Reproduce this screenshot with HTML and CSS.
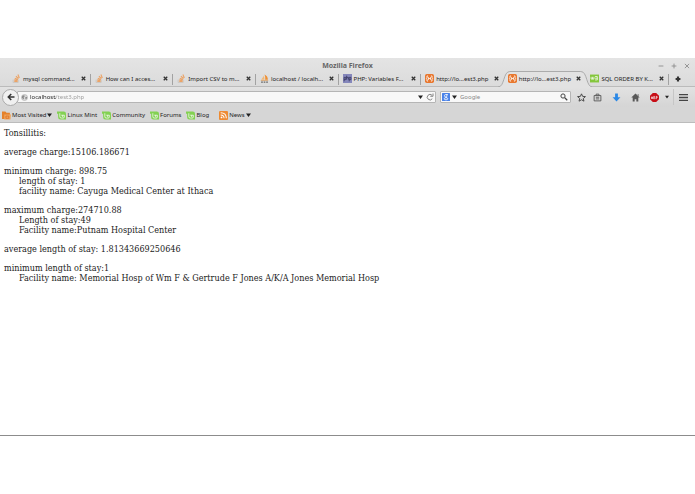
FILE: index.html
```html
<!DOCTYPE html>
<html lang="en">

<head>
  <meta charset="UTF-8">
  <meta name="viewport" content="width=device-width, initial-scale=1.0">
  <title>Mozilla Firefox</title>
  <link rel="stylesheet" href="styles.css">
</head>

<body>
  <!-- Shared icons -->
  <svg class="sprite" aria-hidden="true">
    <symbol id="stack" viewBox="0 0 16 16">
      <path d="M2 10v5h9v-5" fill="none" stroke="#c9c2bc" stroke-width="1.5" />
      <path d="M4 13h6M4 10.500l6 .8M5 7.500l5.500 2.300M7 4l4.500 4M10.500 1l2.500 6" fill="none" stroke="#eba468" stroke-width="2" />
    </symbol>
    <symbol id="pma" viewBox="0 0 16 16">
      <path d="M2 10L7 3l1 7z" fill="#f0b878" />
      <path d="M8 1c4 2 6 5 6 9H9c1-3 0-6-1-9z" fill="#ef8f32" />
      <path d="M1 11h14l-1 1.500H2z" fill="#d9a066" />
      <path d="M2 14.500h3M6.500 14.500h3M11 14.500h3" stroke="#666" stroke-width="2" />
    </symbol>
    <symbol id="phpnet" viewBox="0 0 16 16">
      <rect width="16" height="16" fill="#8587bb" />
      <path d="M2 13V6h3v4H2M6.500 3v7M6.500 6h3v4M11 13V6h3v4h-3" fill="none" stroke="#34345c" stroke-width="1.400" />
    </symbol>
    <symbol id="xampp" viewBox="0 0 16 16">
      <rect width="16" height="16" rx="3" fill="#e8772e" />
      <path d="M5.500 3.500H3.500v3.500l-1 1 1 1v3.500h2M10.500 3.500h2v3.500l1 1-1 1v3.500h-2M6 8h4M6 5.500v5M10 5.500v5" fill="none" stroke="#fff" stroke-width="1.400" />
    </symbol>
    <symbol id="w3" viewBox="0 0 16 16">
      <rect y="1" width="16" height="14" fill="#84c63c" />
      <path d="M2 5v4h5V5M4.500 5v4M9 4.500h4v6H9M9 7.500h4" fill="none" stroke="#fff" stroke-width="1.300" />
    </symbol>
    <symbol id="mint" viewBox="0 0 16 16">
      <path d="M0 1h12q4 0 4 4v10H6q-4 0-4-4V5H0z" fill="#83d152" />
      <path d="M5 4v6q0 2.500 2.500 2.500H11q2 0 2-2V7.500H7.500M10 7.500v3" fill="none" stroke="#fff" stroke-width="1.300" />
    </symbol>
    <symbol id="feed" viewBox="0 0 16 16">
      <rect width="16" height="16" rx="2" fill="#ee8a31" />
      <circle cx="4.500" cy="11.500" r="1.600" fill="#fff" />
      <path d="M3 7q6 0 6 6M3 3q10 0 10 10" fill="none" stroke="#fff" stroke-width="1.800" />
    </symbol>
    <symbol id="visited" viewBox="0 0 16 16">
      <path d="M0 1h6l2 2h6v11H0z" fill="#e5812b" />
      <path d="M4 6h12l-1 9H4z" fill="#f0a45c" />
      <path d="M7 13V9h5v4z" fill="none" stroke="#d9691a" stroke-width="1.200" />
    </symbol>
    <symbol id="close" viewBox="0 0 10 10">
      <path d="M1.500 1.500l7 7M8.500 1.500l-7 7" stroke="#333" stroke-width="2.600" />
    </symbol>
    <symbol id="down" viewBox="0 0 10 8">
      <path d="M0 1h10L5 8z" fill="#222" />
    </symbol>
  </svg>

  <div class="window">
    <header class="chrome">
      <div class="titlebar">
        <span class="title">Mozilla Firefox</span>
        <div class="window-buttons">
          <button aria-label="Minimize"><svg viewBox="0 0 10 10"><path d="M1 5h8" /></svg></button>
          <button aria-label="Maximize"><svg viewBox="0 0 10 10"><path d="M1 5h8M5 1v8" /></svg></button>
          <button aria-label="Close window"><svg viewBox="0 0 10 10"><path d="M1.500 1.500l7 7M8.500 1.500l-7 7" /></svg></button>
        </div>
      </div>

      <div class="tabs">
        <div class="tab">
          <svg class="icon"><use href="#stack" /></svg>
          <button class="tab-label">mysql command...</button>
          <button class="tab-close" aria-label="Close tab"><svg><use href="#close" /></svg></button>
        </div>
        <div class="tab">
          <svg class="icon"><use href="#stack" /></svg>
          <button class="tab-label">How can I acces...</button>
          <button class="tab-close" aria-label="Close tab"><svg><use href="#close" /></svg></button>
        </div>
        <div class="tab">
          <svg class="icon"><use href="#stack" /></svg>
          <button class="tab-label">Import CSV to m...</button>
          <button class="tab-close" aria-label="Close tab"><svg><use href="#close" /></svg></button>
        </div>
        <div class="tab">
          <svg class="icon"><use href="#pma" /></svg>
          <button class="tab-label">localhost / localh...</button>
          <button class="tab-close" aria-label="Close tab"><svg><use href="#close" /></svg></button>
        </div>
        <div class="tab">
          <svg class="icon"><use href="#phpnet" /></svg>
          <button class="tab-label">PHP: Variables F...</button>
          <button class="tab-close" aria-label="Close tab"><svg><use href="#close" /></svg></button>
        </div>
        <div class="tab before-active">
          <svg class="icon"><use href="#xampp" /></svg>
          <button class="tab-label">http://lo...est3.php</button>
          <button class="tab-close" aria-label="Close tab"><svg><use href="#close" /></svg></button>
        </div>
        <div class="tab active">
          <svg class="tab-shape" viewBox="0 0 96 16" preserveAspectRatio="none" aria-hidden="true">
            <path d="M0 16C7 16 5 .5 12 .5H84C91 .5 89 16 96 16" />
          </svg>
          <svg class="icon"><use href="#xampp" /></svg>
          <button class="tab-label">http://lo...est3.php</button>
          <button class="tab-close" aria-label="Close tab"><svg><use href="#close" /></svg></button>
        </div>
        <div class="tab">
          <svg class="icon"><use href="#w3" /></svg>
          <button class="tab-label">SQL ORDER BY K...</button>
          <button class="tab-close" aria-label="Close tab"><svg><use href="#close" /></svg></button>
        </div>
        <button class="new-tab" aria-label="New tab"><svg viewBox="0 0 10 10"><path d="M5 1v8M1 5h8" stroke="#333" stroke-width="3.600" /></svg></button>
      </div>

      <div class="toolbar">
        <button class="back" aria-label="Back"><svg viewBox="0 0 16 16"><path d="M15 8H3M8.500 2L2.500 8l6 6" fill="none" stroke="#333" stroke-width="3" /></svg></button>
        <div class="field address">
          <svg class="globe" viewBox="0 0 16 16"><circle cx="8" cy="8" r="7" fill="#d8d8d8" stroke="#999" /><path d="M3 4l4-1 2 2-3 2 1 3-2 2-3-4zM10 7l4 0-1 4-3 1z" fill="#888" /></svg>
          <input class="url" type="text" aria-label="Address" value="localhost/test3.php">
          <button aria-label="History"><svg class="arrow"><use href="#down" /></svg></button>
          <button aria-label="Reload"><svg class="reload" viewBox="0 0 16 16"><path d="M12.500 11.500A5.500 5.500 0 1 1 12 4.500M14 1v5.500H8.500" fill="none" stroke="#777" stroke-width="1.800" /></svg></button>
        </div>
        <div class="field search">
          <button class="engine" aria-label="Search engine">
            <svg class="google" viewBox="0 0 16 16"><rect width="16" height="16" rx="1" fill="#4a82e8" /><circle cx="7.500" cy="5.500" r="2.500" fill="none" stroke="#fff" stroke-width="1.600" /><ellipse cx="8" cy="11.500" rx="3.500" ry="2.200" fill="none" stroke="#fff" stroke-width="1.600" /><path d="M8 3h4M8 8l1.500 1.500" stroke="#fff" stroke-width="1.400" /></svg>
            <svg class="arrow"><use href="#down" /></svg>
          </button>
          <input type="text" aria-label="Search" placeholder="Google">
          <button aria-label="Go"><svg class="lens" viewBox="0 0 16 16"><circle cx="6" cy="6" r="4.200" fill="none" stroke="#444" stroke-width="2" /><path d="M9.500 9.500l5 5" stroke="#444" stroke-width="2.600" /></svg></button>
        </div>
        <div class="actions">
          <div class="bookmark-buttons">
            <button aria-label="Bookmark this page"><svg viewBox="0 0 16 16"><path d="M8 1.500l2 4.500 5 .4-3.800 3.300 1.200 4.800L8 12l-4.400 2.500 1.200-4.800L1 6.400 6 6z" fill="none" stroke="#444" stroke-width="1.700" /></svg></button>
            <button aria-label="Bookmarks"><svg viewBox="0 0 16 16"><path d="M2 4.500h12v9.500H2zM5.500 4V2h5v2M5 7.500h6M5 10.500h6" fill="none" stroke="#555" stroke-width="1.600" /></svg></button>
          </div>
          <button aria-label="Downloads"><svg viewBox="0 0 16 16"><path d="M5.500 1h5v6.500H15L8 15 1 7.500h4.500z" fill="#2a88e6" /></svg></button>
          <button aria-label="Home"><svg viewBox="0 0 16 16"><path d="M8 1l7.500 7H13v7H9.500v-4h-3v4H3V8H.5zM11.500 2h2v4z" fill="#595959" /></svg></button>
          <button class="adblock" aria-label="Adblock Plus">
            <svg viewBox="0 0 16 16"><path d="M5 0h6l5 5v6l-5 5H5l-5-5V5z" fill="#c70d16" /><path d="M2.500 10.500V7q1-1.500 2 0v3.500M2.500 9h2M6.500 6v4.500h1.500q1.500-1.200 0-2.300 1.200-1.100 0-2.200zM11 11V6h1.500q1.500 1.300 0 2.600H11" fill="none" stroke="#fff" stroke-width="1.100" /></svg>
            <svg class="arrow"><use href="#down" /></svg>
          </button>
          <button class="menu" aria-label="Open menu"><svg viewBox="0 0 16 16"><path d="M0 3h16M0 8h16M0 13h16" stroke="#444" stroke-width="2.400" /></svg></button>
        </div>
      </div>

      <nav class="bookmarks">
        <button><svg class="icon"><use href="#visited" /></svg>Most Visited<svg class="arrow"><use href="#down" /></svg></button>
        <a href="#"><svg class="icon"><use href="#mint" /></svg>Linux Mint</a>
        <a href="#"><svg class="icon"><use href="#mint" /></svg>Community</a>
        <a href="#"><svg class="icon"><use href="#mint" /></svg>Forums</a>
        <a href="#"><svg class="icon"><use href="#mint" /></svg>Blog</a>
        <button class="news"><svg class="icon"><use href="#feed" /></svg>News<svg class="arrow"><use href="#down" /></svg></button>
      </nav>
    </header>

    <main class="page">
      <p>Tonsillitis:</p>
      <p>average charge:15106.186671</p>
      <div class="group">
        <p>minimum charge: 898.75</p>
        <p class="detail">length of stay: 1</p>
        <p class="detail">facility name: Cayuga Medical Center at Ithaca</p>
      </div>
      <div class="group">
        <p>maximum charge:274710.88</p>
        <p class="detail">Length of stay:49</p>
        <p class="detail">Facility name:Putnam Hospital Center</p>
      </div>
      <p>average length of stay: 1.81343669250646</p>
      <div class="group">
        <p>minimum length of stay:1</p>
        <p class="detail">Facility name: Memorial Hosp of Wm F &amp; Gertrude F Jones A/K/A Jones Memorial Hosp</p>
      </div>
    </main>
  </div>
</body>

</html>
```

FILE: styles.css
```css
/* Base styles */
* {
  box-sizing: border-box;
}

body {
  margin: 0;
  padding: 58px 0;
  background-color: #fff;
  font-family: "Noto Sans", "Open Sans", sans-serif;
  font-size: 6px;
  line-height: 10px;
  color: #222;
}

button,
input {
  margin: 0;
  padding: 0;
  border: none;
  background: none;
  color: inherit;
  font: inherit;
}

button {
  display: flex;
  align-items: center;
  cursor: pointer;
}

svg {
  display: block;
  flex: none;
}

.sprite {
  position: absolute;
  width: 0;
  height: 0;
}

.icon {
  width: 9px;
  height: 9px;
}

.arrow {
  width: 5px;
  height: 4px;
}

.window {
  border-bottom: 1px solid #8c8c8c;
}

.chrome {
  background: linear-gradient(#e4e4e4, #d4d4d4 50px);
  border-bottom: 1px solid #bcbcbc;
}

/* Title bar */
.titlebar {
  display: grid;
  grid-template-columns: 1fr auto 1fr;
  align-items: center;
  height: 13px;
  padding: 2px 5px 0;
}

.title {
  grid-column: 2;
  font-size: 7px;
  font-weight: bold;
  color: #666;
}

.window-buttons {
  display: flex;
  justify-content: flex-end;
  gap: 7px;
}

.window-buttons svg {
  width: 6px;
  height: 6px;
  fill: none;
  stroke: #888;
  stroke-width: 1.4;
}

/* Tabs */
.tabs {
  display: flex;
  height: 16px;
  padding-left: 8px;
  border-bottom: 1px solid #bbb;
}

.tab {
  position: relative;
  display: flex;
  flex: 1;
  align-items: center;
  gap: 2px;
  min-width: 0;
  padding: 0 5px 0 4px;
}

/* Separator on the right side of each tab */
.tab::after {
  content: "";
  position: absolute;
  right: 0;
  top: 3px;
  bottom: 1px;
  width: 1px;
  background-color: #a2a2a2;
}

.tab.before-active::after,
.tab.active::after {
  display: none;
}

.tab > * {
  position: relative;
}

.tab-label {
  flex: 1;
  white-space: nowrap;
}

.tab-close svg {
  width: 5px;
  height: 5px;
}

.tab .tab-shape {
  position: absolute;
  left: -6px;
  top: 0;
  width: calc(100% + 12px);
  height: 16px;
  fill: #e2e2e2;
  stroke: #aaa;
}

.new-tab {
  justify-content: center;
  width: 26px;
  padding-right: 8px;
}

.new-tab svg {
  width: 6px;
  height: 6px;
}

/* Toolbar */
.toolbar {
  display: flex;
  align-items: center;
  height: 20px;
  padding: 0 7px 0 2px;
  background: linear-gradient(#e2e2e2, #d5d5d5);
}

.back {
  position: relative;
  z-index: 1;
  justify-content: center;
  width: 17px;
  height: 17px;
  border: 1px solid #aaa;
  border-radius: 50%;
  background-color: #f0f0f0;
}

.back svg {
  width: 8px;
  height: 8px;
}

.field {
  display: flex;
  align-items: center;
  gap: 3px;
  height: 12px;
  border: 1px solid #b5b5b5;
  border-radius: 1px;
  background-color: #f8f8f8;
}

.field input {
  flex: 1;
  min-width: 0;
  height: 10px;
  outline: none;
}

.address {
  flex: 1;
  margin-left: -2px;
  padding: 0 1px 0 3px;
}

.globe {
  width: 7px;
  height: 7px;
}

/* Host part is dark, the path is grey */
.field .url {
  margin-left: -1px;
  background: linear-gradient(to right, #222 26px, #999 26px);
  background-clip: text;
  -webkit-background-clip: text;
  color: transparent;
}

.reload,
.lens {
  width: 8px;
  height: 8px;
}

.search {
  width: 131px;
  margin-left: 4px;
  padding: 0 2px 0 1px;
}

.search input::placeholder {
  color: #888;
  opacity: 1;
}

.engine {
  gap: 2px;
}

.google {
  width: 8px;
  height: 8px;
}

.actions,
.bookmark-buttons {
  display: flex;
  align-items: center;
  gap: 10px;
}

.actions {
  margin-left: 6px;
}

.bookmark-buttons {
  gap: 7px;
}

.actions button {
  gap: 6px;
}

.actions svg {
  width: 9px;
  height: 9px;
}

.actions .arrow {
  width: 4px;
  height: 4px;
}

.actions .menu {
  height: 16px;
  margin-left: -6px;
  padding-left: 5px;
  border-left: 1px solid #c6c6c6;
}

/* Bookmarks bar */
.bookmarks {
  display: flex;
  align-items: center;
  gap: 5px;
  height: 15px;
  padding: 1px 0 0 2px;
  background-color: #d6d6d6;
}

.bookmarks a,
.bookmarks button {
  display: flex;
  align-items: center;
  gap: 1px;
  color: #222;
  text-decoration: none;
  white-space: nowrap;
}

.bookmarks .news {
  margin-left: 5px;
}

/* Page content */
.page {
  display: flex;
  flex-direction: column;
  gap: 9px;
  min-height: 312px;
  padding: 5px 4px;
  font-family: "DejaVu Serif Condensed", "DejaVu Serif", serif;
  font-size: 9px;
  color: #222;
}

.page p {
  margin: 0;
}

.page .detail {
  padding-left: 15px;
}
```
